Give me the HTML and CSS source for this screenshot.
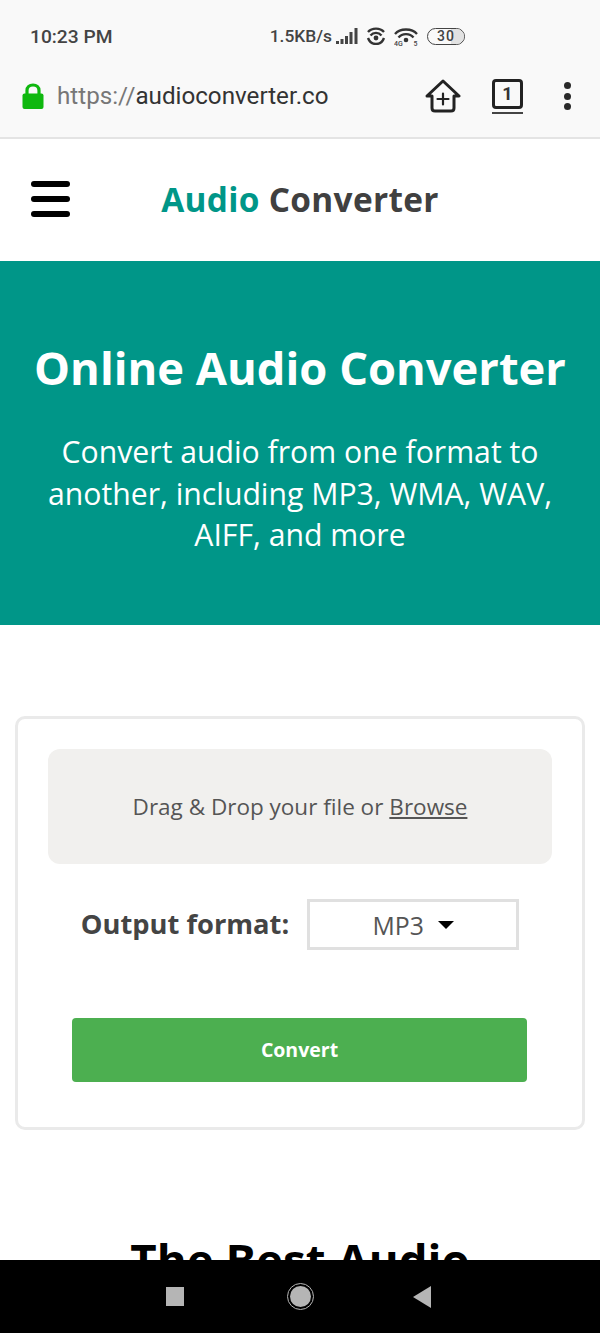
FILE: index.html
```html
<!DOCTYPE html>
<html lang="en">
<head>
  <meta charset="UTF-8" />
  <meta name="viewport" content="width=device-width, initial-scale=1.0"/>
  <title>Online Audio Converter</title>
  <link rel="stylesheet" href="styles.css">
</head>
<body>

<div class="phone">
  <div class="chrome">
    <div class="status-bar">
      <span class="time">10:23 PM</span>
      <div class="status-right">
        <span class="speed">1.5KB/s</span>
        <svg class="signal" width="22" height="16" viewBox="0 0 22 16">
          <rect x="0" y="13" width="3" height="3" fill="#444"/>
          <rect x="4.500" y="11" width="3" height="5" fill="#444"/>
          <rect x="9" y="8" width="3" height="8" fill="#444"/>
          <rect x="13.500" y="4" width="3" height="12" fill="#444"/>
          <rect x="18.500" y="0" width="3" height="16" fill="#444"/>
        </svg>
        <svg class="hotspot" width="20" height="18" viewBox="0 0 20 18" fill="none" stroke="#333" stroke-width="2.400">
          <path d="M2 5C6 0.500 14 0.500 18 5"/>
          <path d="M4.500 8.500C7.500 5 12.500 5 15.500 8.500"/>
          <path d="M2 11C3.500 15 7 17 10 17C13 17 16.500 15 18 11"/>
          <circle cx="10" cy="11" r="2.400" fill="#333" stroke="none"/>
        </svg>
        <svg class="wifi" width="24" height="19" viewBox="0 0 24 19" fill="none" stroke="#333" stroke-width="2.300">
          <path d="M1 7C6 1 18 1 23 7"/>
          <path d="M4.500 10.500C8 6 16 6 19.500 10.500"/>
          <circle cx="12" cy="13" r="2.300" fill="#333" stroke="none"/>
          <text class="wifi-tag" x="0" y="18.500">4G</text>
          <text class="wifi-tag" x="19.500" y="18.500">5</text>
        </svg>
        <div class="battery"><span class="battery-fill"></span><span class="battery-num">30</span></div>
      </div>
    </div>
    <div class="url-bar">
      <svg class="lock" width="24" height="28" viewBox="0 0 24 28">
        <path d="M6 13V8.500C6 5 8.500 3 12 3C15.500 3 18 5 18 8.500V13" fill="none" stroke="#0fb80f" stroke-width="3.200"/>
        <rect x="1.500" y="11.500" width="21" height="15.500" rx="2" fill="#0fb80f"/>
      </svg>
      <div class="url"><span class="scheme">https://</span>audioconverter.co</div>
      <svg class="home" width="36" height="34" viewBox="0 0 36 34" fill="none" stroke="#222" stroke-width="3" stroke-linejoin="round" stroke-linecap="round">
        <path d="M2 17L18 2L34 17H29V29C29 31 28 32 26 32H10C8 32 7 31 7 29V17Z"/>
        <path d="M18 14.500V25.500M12.500 20H23.500" stroke-width="2.200"/>
      </svg>
      <div class="tabs"><div class="tab-box">1</div></div>
      <div class="dots"><span></span><span></span><span></span></div>
    </div>
  </div>

  <div class="page">
    <div class="site-header">
      <div class="burger"><span></span><span></span><span></span></div>
      <div class="logo"><span class="logo-green">Audio</span> Converter</div>
    </div>

    <div class="hero">
      <h1>Online Audio Converter</h1>
      <p>Convert audio from one format to another, including MP3, WMA, WAV, AIFF, and more</p>
    </div>

    <div class="card">
      <div class="dropzone">Drag &amp; Drop your file or <u>Browse</u></div>
      <div class="format-row">
        <span class="format-label">Output format:</span>
        <div class="select">MP3 <span class="caret"></span></div>
      </div>
      <button class="convert">Convert</button>
    </div>

    <h2>The Best Audio</h2>
  </div>

  <div class="nav-bar">
    <span class="nav-square"></span>
    <span class="nav-circle"><span></span></span>
    <span class="nav-back"></span>
  </div>
</div>

</body>
</html>
```

FILE: styles.css
```css
* {
  box-sizing: border-box;
}

body {
  font-family: 'Open Sans', Arial, sans-serif;
  background-color: #fff;
  margin: 0;
  padding: 0;
}

.phone {
  width: 600px;
  height: 1333px;
  display: flex;
  flex-direction: column;
  overflow: hidden;
}

.chrome {
  height: 139px;
  background-color: #f9f9f9;
  border-bottom: 2px solid #e4e4e4;
  flex-shrink: 0;
}

.status-bar {
  height: 72px;
  padding: 0 135px 0 30px;
  display: flex;
  justify-content: space-between;
  align-items: center;
  font-family: Roboto, Arial, sans-serif;
  color: #444;
}

.time {
  font-size: 19.200px;
  font-weight: 500;
}

.status-right {
  display: flex;
  align-items: center;
  gap: 8px;
}

.speed {
  font-size: 17.400px;
  font-weight: 500;
  margin-right: -4px;
}

.wifi-tag {
  font-family: Roboto, Arial, sans-serif;
  font-size: 7px;
  font-weight: 500;
  fill: #444;
  stroke: none;
}

.battery {
  position: relative;
  width: 38px;
  height: 17px;
  border: 1.500px solid #444;
  border-radius: 8.500px;
  overflow: hidden;
  margin-left: 1px;
}

.battery-fill {
  position: absolute;
  top: 0;
  bottom: 0;
  right: 0;
  width: 13px;
  background-color: #e2e2e2;
}

.battery-num {
  position: relative;
  display: block;
  text-align: center;
  font-size: 14px;
  line-height: 14px;
  font-weight: 500;
  letter-spacing: 1px;
}

.url-bar {
  height: 48px;
  padding: 0 21px;
  display: flex;
  align-items: center;
}

.lock {
  flex-shrink: 0;
}

.url {
  font-family: Roboto, Arial, sans-serif;
  font-size: 24.200px;
  color: #333;
  margin-left: 12px;
  width: 370px;
}

.scheme {
  color: #777;
}

.home {
  margin-left: -2px;
  flex-shrink: 0;
}

.tabs {
  margin-left: 31px;
  width: 31px;
  border-bottom: 2px solid #444;
  padding-bottom: 3px;
  flex-shrink: 0;
}

.tab-box {
  height: 30px;
  border: 3px solid #222;
  border-radius: 4px;
  font-family: Roboto, Arial, sans-serif;
  font-size: 18px;
  font-weight: 700;
  line-height: 23px;
  text-align: center;
  color: #333;
}

.dots {
  margin-left: 41px;
  display: flex;
  flex-direction: column;
  gap: 3.500px;
}

.dots span {
  width: 7px;
  height: 7px;
  border-radius: 50%;
  background-color: #2a2a2a;
}

.page {
  flex: 1;
  overflow: hidden;
}

.site-header {
  position: relative;
  height: 122px;
  display: flex;
  align-items: center;
  justify-content: center;
  padding-bottom: 3px;
}

.burger {
  position: absolute;
  left: 31px;
  top: 42px;
  display: flex;
  flex-direction: column;
  gap: 9px;
}

.burger span {
  width: 39px;
  height: 6px;
  border-radius: 3px;
  background-color: #000;
}

.logo {
  font-size: 33.400px;
  font-weight: 700;
  color: #404040;
  letter-spacing: 0.320px;
}

.logo-green {
  color: #009688;
}

.hero {
  height: 364px;
  background-color: #009688;
  color: #fff;
  text-align: center;
  padding: 77px 30px 0;
}

.hero h1 {
  margin: 0;
  font-size: 45.300px;
  line-height: 60px;
  font-weight: 700;
  white-space: nowrap;
}

.hero p {
  margin: 33px 0 0;
  font-size: 30.200px;
  line-height: 41.500px;
}

.card {
  margin: 91px 15px 0;
  height: 414px;
  border: 3px solid #eaeaea;
  border-radius: 10px;
  padding: 30px;
}

.dropzone {
  height: 115px;
  background-color: #f1f0ee;
  border-radius: 12px;
  display: flex;
  align-items: center;
  justify-content: center;
  gap: 6px;
  font-size: 22.500px;
  color: #555;
}

.format-row {
  margin-top: 35px;
  display: flex;
  align-items: center;
  justify-content: center;
  gap: 18px;
}

.format-label {
  font-size: 27.300px;
  font-weight: 700;
  color: #444;
  padding-bottom: 2px;
}

.select {
  width: 212px;
  height: 51px;
  border: 3px solid #e0e0e0;
  display: flex;
  align-items: center;
  justify-content: center;
  gap: 14px;
  font-size: 24.800px;
  color: #555;
}

.caret {
  width: 0;
  height: 0;
  border-left: 8px solid transparent;
  border-right: 8px solid transparent;
  border-top: 8px solid #000;
}

.convert {
  display: block;
  margin: 68px 0 0 24px;
  width: 455px;
  height: 64px;
  padding-bottom: 3px;
  background-color: #4caf50;
  color: #fff;
  font-family: 'Open Sans', Arial, sans-serif;
  font-size: 19.500px;
  font-weight: 700;
  border: none;
  border-radius: 4px;
}

h2 {
  margin: 99px 0 0;
  text-align: center;
  font-size: 45.600px;
  line-height: 60px;
  font-weight: 700;
  color: #000;
}

.nav-bar {
  height: 73px;
  background-color: #000;
  flex-shrink: 0;
  display: flex;
  align-items: center;
  position: relative;
}

.nav-square {
  position: absolute;
  left: 166px;
  top: 27px;
  width: 18px;
  height: 19px;
  background-color: #b5b5b5;
}

.nav-circle {
  position: absolute;
  left: 287px;
  top: 23px;
  width: 27px;
  height: 27px;
  border: 1.500px solid #b5b5b5;
  border-radius: 50%;
  padding: 2px;
}

.nav-circle span {
  display: block;
  width: 100%;
  height: 100%;
  border-radius: 50%;
  background-color: #b5b5b5;
}

.nav-back {
  position: absolute;
  left: 413px;
  top: 26px;
  width: 0;
  height: 0;
  border-top: 11px solid transparent;
  border-bottom: 11px solid transparent;
  border-right: 18px solid #b5b5b5;
}
```
